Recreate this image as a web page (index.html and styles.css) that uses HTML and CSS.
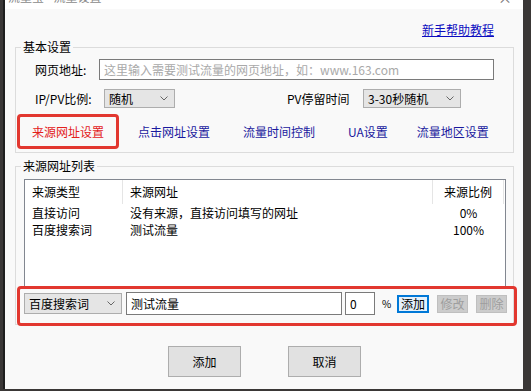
FILE: index.html
```html
<!DOCTYPE html>
<html lang="zh-CN">
<head>
    <meta charset="UTF-8">
    <title>流量宝 - 流量设置</title>
    <link rel="stylesheet" href="styles.css">
</head>
<body>
    <div class="window">
        <div class="titlebar">
            <span class="title">流量宝 - 流量设置</span>
            <span class="close">×</span>
        </div>

        <div class="content">
            <div class="help-row">
                <a href="#" class="help-link">新手帮助教程</a>
            </div>

            <fieldset class="group basic">
                <legend>基本设置</legend>
                <div class="row url-row">
                    <label class="label url-label">网页地址:</label>
                    <input type="text" class="text-input url-input" placeholder="这里输入需要测试流量的网页地址，如：www.163.com">
                </div>
                <div class="row option-row">
                    <label class="label ratio-label">IP/PV比例:</label>
                    <div class="combo ratio-combo">
                        <span>随机</span>
                        <svg class="chevron" width="8" height="5" viewBox="0 0 8 5"><path d="M0.5 0.5 L4 4 L7.5 0.5" fill="none" stroke="#666" stroke-width="1"/></svg>
                    </div>
                    <label class="label stay-label">PV停留时间</label>
                    <div class="combo stay-combo">
                        <span>3-30秒随机</span>
                        <svg class="chevron" width="8" height="5" viewBox="0 0 8 5"><path d="M0.5 0.5 L4 4 L7.5 0.5" fill="none" stroke="#666" stroke-width="1"/></svg>
                    </div>
                </div>
                <div class="tabs">
                    <span class="tab active">来源网址设置</span>
                    <span class="tab">点击网址设置</span>
                    <span class="tab">流量时间控制</span>
                    <span class="tab">UA设置</span>
                    <span class="tab">流量地区设置</span>
                </div>
            </fieldset>

            <fieldset class="group source">
                <legend>来源网址列表</legend>
                <div class="list">
                    <div class="list-head">
                        <div class="cell">来源类型</div>
                        <div class="cell">来源网址</div>
                        <div class="cell ratio">来源比例</div>
                    </div>
                    <div class="list-row">
                        <div class="cell">直接访问</div>
                        <div class="cell">没有来源，直接访问填写的网址</div>
                        <div class="cell ratio">0%</div>
                    </div>
                    <div class="list-row">
                        <div class="cell">百度搜索词</div>
                        <div class="cell">测试流量</div>
                        <div class="cell ratio">100%</div>
                    </div>
                </div>

                <div class="edit-row">
                    <div class="combo type-combo">
                        <span>百度搜索词</span>
                        <svg class="chevron" width="8" height="5" viewBox="0 0 8 5"><path d="M0.5 0.5 L4 4 L7.5 0.5" fill="none" stroke="#666" stroke-width="1"/></svg>
                    </div>
                    <input type="text" class="text-input word-input" value="测试流量">
                    <input type="text" class="text-input ratio-input" value="0">
                    <span class="percent">%</span>
                    <button class="small-btn add-small">添加</button>
                    <button class="small-btn disabled-btn">修改</button>
                    <button class="small-btn disabled-btn">删除</button>
                    <div class="mark"></div>
                </div>
            </fieldset>

            <div class="actions">
                <button class="btn">添加</button>
                <button class="btn">取消</button>
            </div>
        </div>
    </div>
</body>
</html>
```

FILE: styles.css
```css
* {
    margin: 0;
    padding: 0;
    box-sizing: border-box;
}

body {
    font-family: "Noto Sans CJK SC", "Noto Sans", sans-serif;
    font-size: 12px;
    color: #000;
    background: #3a3736;
    height: 391px;
    overflow: hidden;
}

.window {
    margin-left: 3px;
    width: 520px;
    height: 389px;
    background: #f9f9f9;
    border-left: 2px solid #1e1e1e;
}

.titlebar {
    height: 9px;
    background: #fff;
    display: flex;
    justify-content: space-between;
    align-items: flex-start;
    padding: 0 11px 0 3px;
    overflow: hidden;
}

.title {
    line-height: 12px;
    color: #8a8a8a;
    transform: translateY(-9px);
}

.close {
    font-size: 14px;
    line-height: 14px;
    color: #777;
    transform: translateY(-10px);
}

.content {
    padding: 0 9px 0 10px;
}

.help-row {
    margin-top: 14px;
    text-align: right;
    padding-right: 20px;
    line-height: 14px;
}

.help-link {
    color: #0c0cc0;
    text-decoration: underline;
}

.group {
    border: 1px solid #dcdcdc;
    min-width: 0;
}

.group legend {
    margin-left: 5px;
    padding: 0 2px;
    line-height: 14px;
}

.basic {
    margin-top: 3px;
    padding: 0 0 3px;
}

.row {
    display: flex;
    align-items: center;
    padding-left: 19px;
}

.label {
    flex: none;
    line-height: 14px;
}

.url-row {
    margin-top: 5px;
    height: 21px;
}

.url-label {
    width: 64px;
}

.text-input {
    font: inherit;
    color: #000;
    height: 21px;
    border: 1px solid #7a7a7a;
    background: #fff;
    padding: 0 4px;
    outline: none;
    flex: none;
}

.url-input {
    width: 395px;
}

.url-input::placeholder {
    color: #a9a9a9;
}

.option-row {
    margin-top: 9px;
    height: 19px;
}

.ratio-label {
    width: 69px;
}

.combo {
    display: flex;
    align-items: center;
    justify-content: space-between;
    height: 19px;
    border: 1px solid #adadad;
    background: #e5e5e5;
    padding: 0 6px 0 4px;
    line-height: 14px;
    flex: none;
}

.ratio-combo {
    width: 71px;
}

.stay-label {
    margin-left: 112px;
    width: 76px;
}

.stay-combo {
    width: 98px;
}

.tabs {
    display: flex;
    align-items: center;
    height: 35px;
    margin-top: 6px;
    padding-left: 1px;
}

.tab {
    color: #1a1a9e;
    margin-left: 33px;
    line-height: 14px;
}

.tab.active {
    margin-left: 0;
    width: 102px;
    height: 35px;
    border: 3px solid #e2372f;
    border-radius: 4px;
    color: #e3211c;
    display: flex;
    align-items: center;
    justify-content: center;
}

.tab.active + .tab {
    margin-left: 19px;
}

.tab:last-child {
    margin-left: 29px;
}

.source {
    margin-top: 6px;
    padding: 0 0 9px;
}

.list {
    margin: 6px 0 0 8px;
    width: 482px;
    height: 108px;
    border: 1px solid #828790;
    background: #fff;
}

.list-head,
.list-row {
    display: grid;
    grid-template-columns: 98px 310px 71px;
}

.list-head {
    height: 24px;
}

.list-head .cell {
    border-right: 1px solid #e5e5e5;
}

.list-row {
    height: 17px;
}

.cell {
    display: flex;
    align-items: center;
    padding-left: 7px;
    line-height: 14px;
    white-space: nowrap;
}

.cell.ratio {
    justify-content: center;
    padding-left: 0;
}

.edit-row {
    position: relative;
    display: flex;
    align-items: center;
    height: 23px;
    margin: 5px 0 0 8px;
}

.type-combo {
    width: 98px;
    height: 21px;
}

.word-input {
    width: 216px;
    height: 23px;
    margin-left: 4px;
}

.ratio-input {
    width: 30px;
    height: 23px;
    margin-left: 3px;
}

.percent {
    width: 15px;
    margin-left: 7px;
    font-size: 10px;
    line-height: 14px;
}

.small-btn {
    font: inherit;
    height: 18px;
    line-height: 14px;
    padding: 0;
    flex: none;
}

.add-small {
    width: 32px;
    background: #e5f1fb;
    border: 1px solid #0078d7;
    box-shadow: inset 0 0 0 1px #0078d7;
    color: #000;
}

.disabled-btn {
    margin-left: 8px;
    width: 31px;
    background: #cccccc;
    border: 1px solid #bfbfbf;
    color: #9e9e9e;
}

.mark {
    position: absolute;
    left: -7px;
    top: -6px;
    width: 500px;
    height: 40px;
    border: 3px solid #e2372f;
    border-radius: 4px;
    pointer-events: none;
}

.actions {
    display: flex;
    justify-content: center;
    gap: 47px;
    margin-top: 21px;
}

.btn {
    font: inherit;
    width: 73px;
    height: 31px;
    background: #e1e1e1;
    border: 1px solid #adadad;
    color: #000;
}
```
